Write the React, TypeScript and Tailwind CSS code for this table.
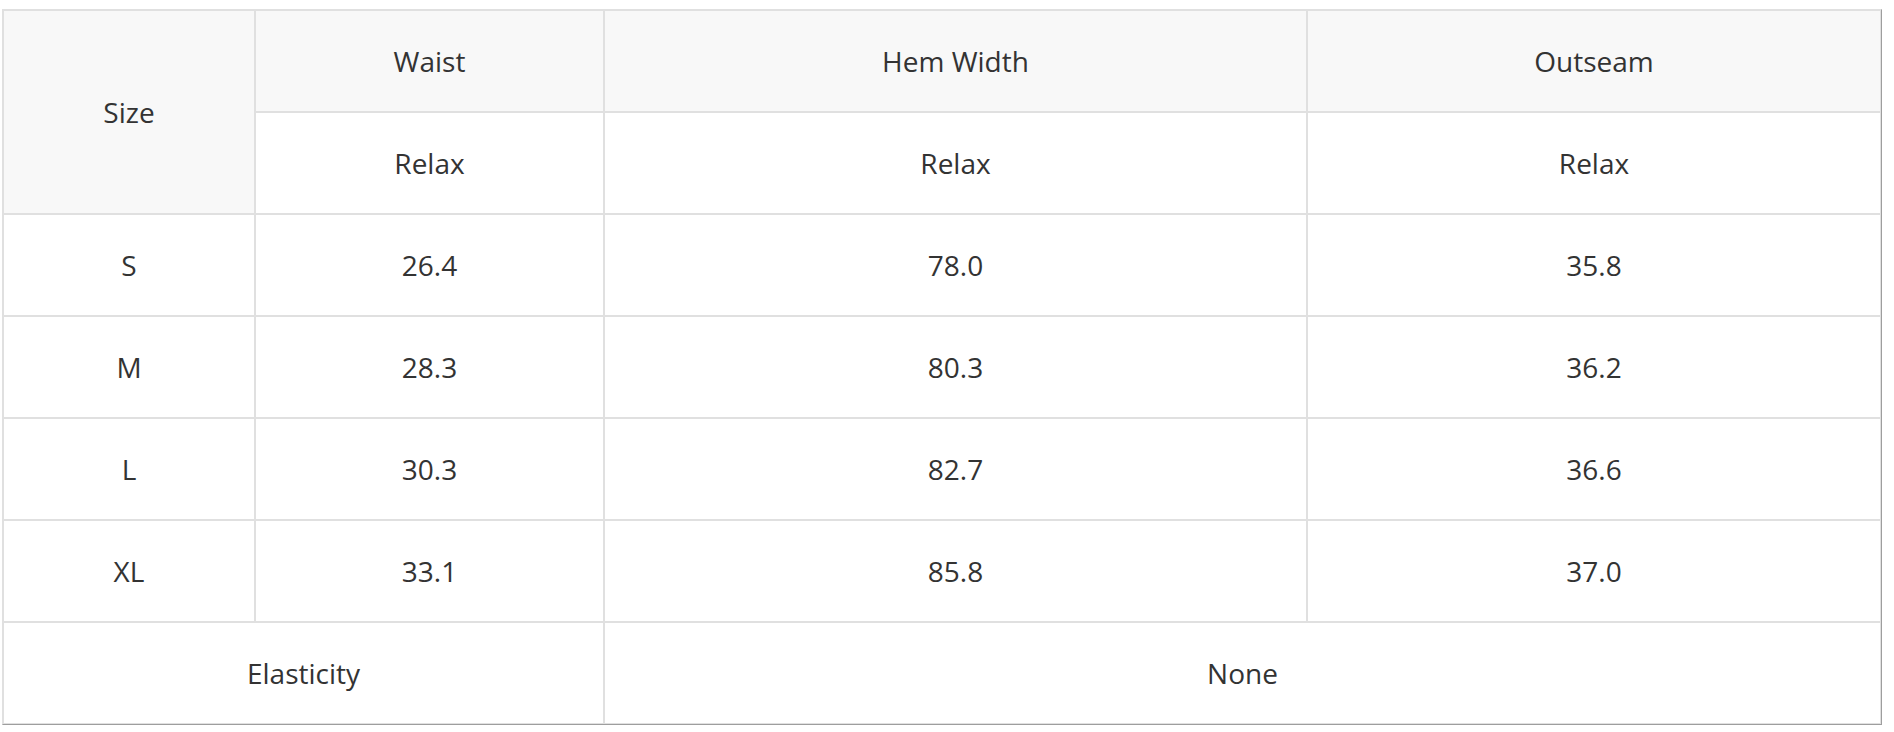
const rows = [
  { size: "S", waist: "26.4", hem: "78.0", outseam: "35.8" },
  { size: "M", waist: "28.3", hem: "80.3", outseam: "36.2" },
  { size: "L", waist: "30.3", hem: "82.7", outseam: "36.6" },
  { size: "XL", waist: "33.1", hem: "85.8", outseam: "37.0" },
];

const cell = "h-[102px] p-0 text-center align-middle border border-[#e0e0e0] font-normal";
const head = cell + " bg-[#f8f8f8]";

export default function App() {
  return (
    <div className="min-h-screen bg-white pt-[9px] pl-[2px] font-['Open_Sans',sans-serif] text-[28px] leading-normal text-[#333]">
      <table className="w-[1880px] table-fixed border-separate border-spacing-0 border-t border-l border-r border-b border-t-[#e0e0e0] border-l-[#e0e0e0] border-r-[#9e9e9e] border-b-[#9e9e9e]">
        <colgroup>
          <col className="w-[252px]" />
          <col className="w-[349px]" />
          <col className="w-[703px]" />
          <col className="w-[574px]" />
        </colgroup>
        <thead>
          <tr>
            <th rowSpan={2} className={head}>Size</th>
            <th className={head}>Waist</th>
            <th className={head}>Hem Width</th>
            <th className={head}>Outseam</th>
          </tr>
          <tr>
            <td className={cell}>Relax</td>
            <td className={cell}>Relax</td>
            <td className={cell}>Relax</td>
          </tr>
        </thead>
        <tbody>
          {rows.map((r) => (
            <tr key={r.size}>
              <td className={cell}>{r.size}</td>
              <td className={cell}>{r.waist}</td>
              <td className={cell}>{r.hem}</td>
              <td className={cell}>{r.outseam}</td>
            </tr>
          ))}
          <tr>
            <td colSpan={2} className={cell}>Elasticity</td>
            <td colSpan={2} className={cell}>None</td>
          </tr>
        </tbody>
      </table>
    </div>
  );
}
